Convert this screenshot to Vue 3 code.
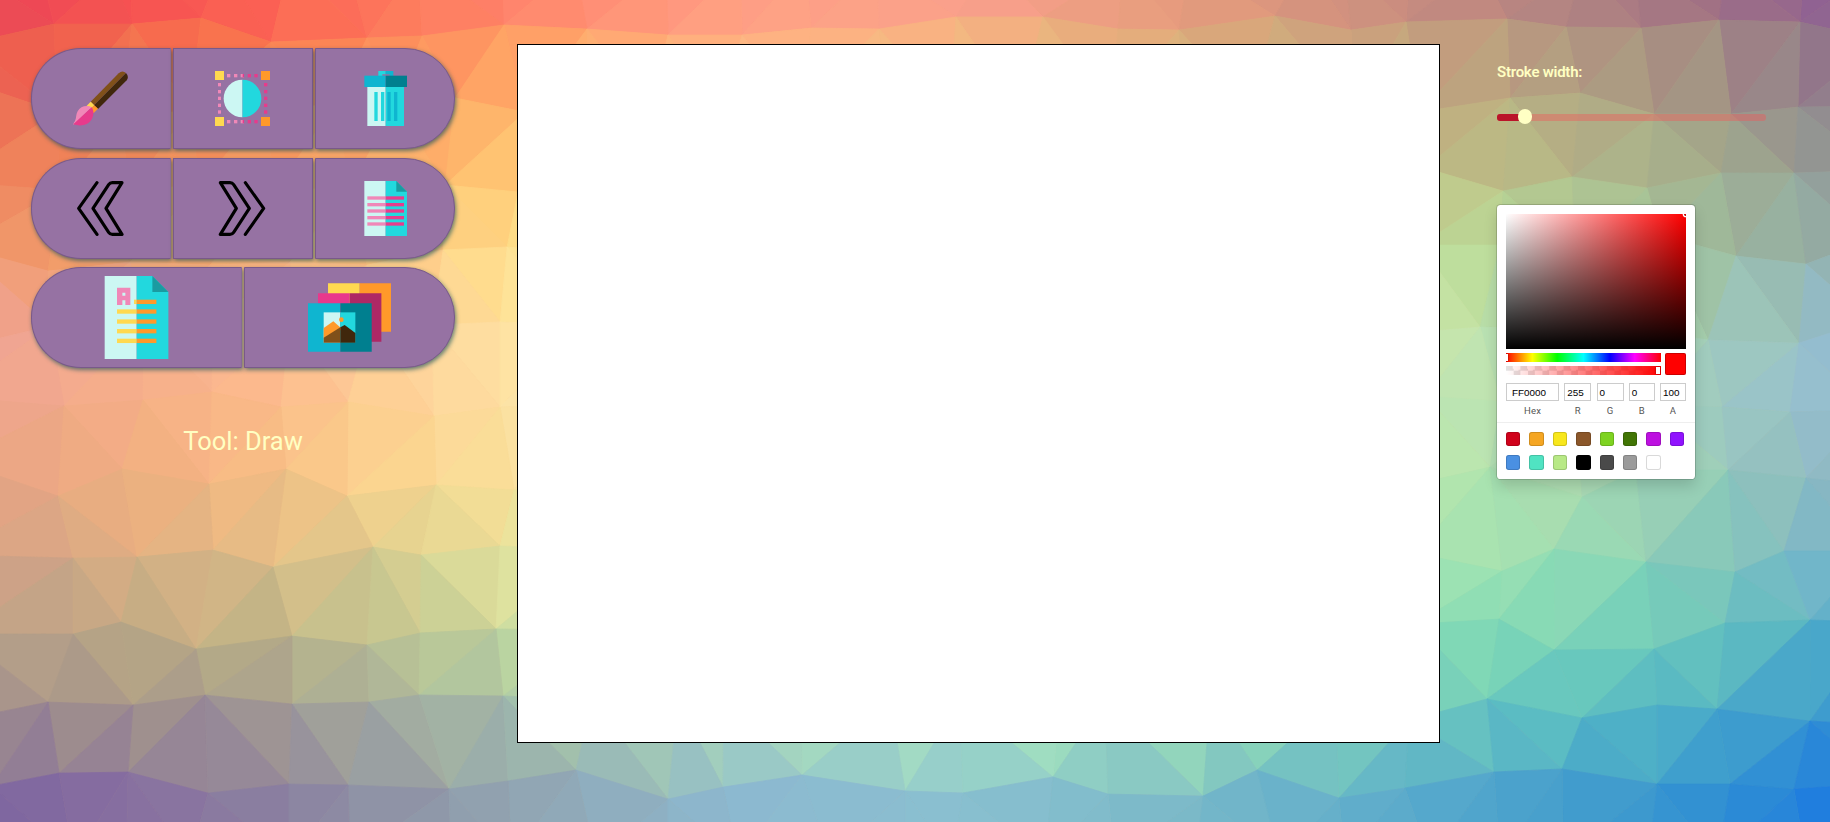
<script setup>
import { ref } from 'vue'

// Mesh vertices, one row of x,y pairs per line.
const rows = [
  [-30,-30, 40,-32, 110,-28, 130,-55, 222,-35, 290,-38, 347,-38, 418,-38, 503,-35, 575,-35, 666,-35, 740,-35, 805,-35, 877,-35, 990,-38, 1124,-35, 1190,-38, 1305,-38, 1345,-35, 1410,-35, 1480,-35, 1583,-35, 1635,-35, 1726,-35, 1804,-35, 1880,-35],
  [-30,43, 54,24, 132,24, 201,18, 271,42, 367,38, 422,36, 504,25, 587,29, 668,35, 742,35, 811,28, 879,29, 956,17, 1043,17, 1118,29, 1179,30, 1275,16, 1351,30, 1406,22, 1507,19, 1566,27, 1641,28, 1719,20, 1800,22, 1880,40],
  [-50,76, 57,112, 120,118, 190,110, 265,108, 335,105, 395,105, 455,98, 525,112, 590,110, 650,108, 720,110, 800,108, 890,110, 950,108, 1020,110, 1110,108, 1185,110, 1250,108, 1355,110, 1420,112, 1510,98, 1580,93, 1654,114, 1731,114, 1798,107, 1880,106],
  [-50,182, 60,190, 130,190, 200,185, 275,190, 350,188, 445,185, 518,192, 620,190, 1340,180, 1425,168, 1503,191, 1572,177, 1647,188, 1721,173, 1794,173, 1880,170],
  [-40,247, 48,271, 130,262, 210,265, 290,262, 367,265, 443,250, 507,247, 600,255, 1350,245, 1420,245, 1500,245, 1575,255, 1660,235, 1736,256, 1806,264, 1870,240],
  [-50,350, 50,326, 144,322, 213,322, 290,322, 370,322, 432,325, 500,322, 580,325, 1350,335, 1420,332, 1480,327, 1570,330, 1640,330, 1708,340, 1799,343, 1870,320],
  [-50,397, 64,406, 143,400, 212,392, 281,407, 348,402, 434,416, 500,407, 580,405, 1350,405, 1425,396, 1500,401, 1575,400, 1650,405, 1722,407, 1790,412, 1870,410],
  [-45,461, 58,496, 122,469, 209,484, 286,469, 347,496, 436,485, 514,490, 590,480, 1350,475, 1420,483, 1490,467, 1582,497, 1636,470, 1728,470, 1806,478, 1880,486],
  [-50,555, 73,558, 137,557, 213,550, 273,567, 373,547, 421,555, 500,546, 590,550, 1350,560, 1415,553, 1502,571, 1554,549, 1646,562, 1735,572, 1784,551, 1870,551],
  [-40,634, 73,634, 121,622, 196,649, 292,636, 367,645, 420,633, 496,629, 590,630, 680,630, 770,630, 860,630, 950,630, 1050,630, 1150,630, 1250,630, 1340,630, 1415,624, 1499,619, 1554,650, 1654,649, 1725,623, 1810,620, 1880,622],
  [-30,718, 48,702, 133,705, 205,695, 292,704, 369,702, 419,695, 503,696, 592,700, 678,700, 724,700, 803,700, 890,700, 960,700, 1060,700, 1105,700, 1210,700, 1335,700, 1409,720, 1487,699, 1582,718, 1657,705, 1717,709, 1810,721, 1880,725],
  [-8,786, 59,773, 128,772, 208,793, 289,784, 348,785, 449,789, 508,781, 576,770, 668,799, 723,787, 802,775, 905,791, 963,793, 1053,777, 1108,794, 1203,796, 1257,770, 1339,798, 1405,788, 1494,772, 1562,769, 1657,784, 1730,784, 1794,789, 1880,783],
  [-20,860, 74,860, 126,860, 190,860, 289,860, 350,860, 451,860, 511,860, 596,860, 668,860, 738,860, 830,860, 905,860, 952,860, 1045,860, 1115,860, 1195,860, 1280,860, 1345,860, 1430,860, 1500,860, 1563,860, 1648,860, 1718,860, 1806,860, 1890,860],
]

// Colour field sampled at each triangle's centroid.
const ys = [0, 60, 150, 250, 330, 400, 480, 560, 640, 720, 800]
const field = [
  [0, 'ec4656 ec5c50 ee7c58 f0986c f0a594 f0a68e e8a582 d5a387 b8a188 9e8c8e 7e66a0'],
  [130, 'f65252 f4694c f28c5a f4a46c f5af8e f6ad88 f0ae7e dcb084 baa884 a0908c 886fa0'],
  [260, 'fb6054 fb7a4e fa9b60 fab274 fcb991 fcb98a f6bd82 deba87 bab286 a09692 8a7ea0'],
  [390, 'fd765c fd8e5c fdae6a fec67f fdd09b fed195 fad48e dacd8e bcc492 a5ac9e 8f94a6'],
  [517, 'ff846c ffa064 ffc370 ffe28a ffe4a0 fee2a8 f9e096 e6e49e bed79e a2bca8 91a5b2'],
  [740, 'ff9e84 ffb282 f8c888 f4dc98 f2e4a8 ece6ac e4e4aa d4e4aa bce2b0 a5d4be 8cb9d0'],
  [960, 'faa08c f8b680 e8c488 e0d896 dce4a8 d4e6ac cee4aa c0e4ae b4e4b6 a5e1c3 8ac0d0'],
  [1180, 'e69b7d deac7a d4c084 cede94 cce4aa c8e6b0 c0e4ac b4e4b0 a2e0b4 96dab9 7ab9c8'],
  [1440, 'c48a80 c2a07e c0b882 c0de96 c6e4aa c4e6b2 b6e6ac a5e4b2 86dcb4 6cc6be 55a8cc'],
  [1570, 'b28282 b29b80 b4b687 aed49a b2deb4 acdeb9 acdab0 98deb4 76d4b8 5abec3 449ecc'],
  [1700, 'a07084 a48e82 a4aa8a 9ebe9e a2ceb4 a0cac2 98ccb6 82c8ba 6ac6bc 4bacc8 3291d2'],
  [1830, '906292 92768a 929492 94b0a8 92bcce 96bed0 8eb8c0 78b6ca 4eacc8 3492d2 207ede'],
].map(([x, s]) => [x, s.split(' ').map((h) => [0, 2, 4].map((i) => parseInt(h.slice(i, i + 2), 16)))])

function locate(list, v) {
  if (v <= list[0]) return [0, 0]
  const last = list.length - 1
  if (v >= list[last]) return [last - 1, 1]
  let i = 0
  while (list[i + 1] < v) i++
  return [i, (v - list[i]) / (list[i + 1] - list[i])]
}

const xs = field.map((f) => f[0])

function colorAt(x, y) {
  const [i, tx] = locate(xs, x)
  const [j, ty] = locate(ys, y)
  const mix = (a, b, t) => a + (b - a) * t
  const rgb = [0, 1, 2].map((c) =>
    Math.round(
      mix(
        mix(field[i][1][j][c], field[i + 1][1][j][c], tx),
        mix(field[i][1][j + 1][c], field[i + 1][1][j + 1][c], tx),
        ty,
      ),
    ),
  )
  return `rgb(${rgb.join(',')})`
}

// Bowyer-Watson Delaunay triangulation.
function triangulate(input) {
  const pts = input.concat([[-9000, -9000], [12000, -9000], [900, 15000]])
  const n = input.length
  const make = (a, b, c) => {
    const [ax, ay] = pts[a]
    const [bx, by] = pts[b]
    const [cx, cy] = pts[c]
    const d = 2 * (ax * (by - cy) + bx * (cy - ay) + cx * (ay - by))
    if (Math.abs(d) < 1e-9) return { v: [a, b, c], x: 0, y: 0, r: Infinity }
    const a2 = ax * ax + ay * ay
    const b2 = bx * bx + by * by
    const c2 = cx * cx + cy * cy
    const x = (a2 * (by - cy) + b2 * (cy - ay) + c2 * (ay - by)) / d
    const y = (a2 * (cx - bx) + b2 * (ax - cx) + c2 * (bx - ax)) / d
    return { v: [a, b, c], x, y, r: (ax - x) ** 2 + (ay - y) ** 2 }
  }
  let tris = [make(n, n + 1, n + 2)]
  for (let p = 0; p < n; p++) {
    const [px, py] = pts[p]
    const edges = new Map()
    tris = tris.filter((t) => {
      if ((px - t.x) ** 2 + (py - t.y) ** 2 >= t.r) return true
      for (let k = 0; k < 3; k++) {
        const e = [t.v[k], t.v[(k + 1) % 3]].sort((m, q) => m - q)
        const key = e.join()
        if (edges.has(key)) edges.delete(key)
        else edges.set(key, e)
      }
      return false
    })
    for (const [a, b] of edges.values()) tris.push(make(a, b, p))
  }
  return tris.filter((t) => t.v.every((i) => i < n)).map((t) => t.v.map((i) => pts[i]))
}

// A small jitter avoids degenerate collinear seeds.
const vertices = rows.flatMap((r) => {
  const out = []
  for (let i = 0; i < r.length; i += 2) {
    out.push([r[i] + ((i * 7) % 5) * 0.02, r[i + 1] + ((i * 3) % 7) * 0.02])
  }
  return out
})

const facets = triangulate(vertices).map((t) => ({
  points: t.map((p) => `${p[0].toFixed(1)},${p[1].toFixed(1)}`).join(' '),
  fill: colorAt((t[0][0] + t[1][0] + t[2][0]) / 3, (t[0][1] + t[1][1] + t[2][1]) / 3),
}))

const tool = ref('Draw')
const dots = [36, 57, 77, 98, 118]
const docLines = [46, 66, 85, 105, 124]
const articleLines = [100, 130, 159, 188]
const fields = [
  { label: 'Hex', value: 'FF0000', kind: 'hex' },
  { label: 'R', value: '255' },
  { label: 'G', value: '0' },
  { label: 'B', value: '0' },
  { label: 'A', value: '100' },
]
const presets = [
  '#d0021b', '#f5a623', '#f8e71c', '#8b572a', '#7ed321', '#417505', '#bd10e0', '#9013fe',
  '#4a90e2', '#50e3c2', '#b8e986', '#000000', '#4a4a4a', '#9b9b9b', '#ffffff',
]
</script>

<template>
  <div class="page">
    <svg class="mesh" width="1830" height="822" viewBox="0 0 1830 822" aria-hidden="true">
      <polygon v-for="(f, i) in facets" :key="i" :points="f.points" :fill="f.fill" :stroke="f.fill" stroke-width="0.8" />
    </svg>

    <aside class="tools">
      <div class="group">
        <button class="btn" aria-label="Draw">
          <svg class="icon" viewBox="0 0 165 165">
            <path fill="#80501a" d="M53 92 137 7Q148-4 159 6L63 103Z" />
            <path fill="#40270c" d="M63 103 159 6Q169 16 161 28L75 114Z" />
            <path fill="#ffd950" d="M53 92 40 106 52 115 64 103Z" />
            <path fill="#ff992a" d="M64 103 75 113 62 126 50 116Z" />
            <path fill="#f088b8" d="M56 109 1 162Q0 157 6 150C11 140 8 131 14 121 22 105 43 101 56 109Z" />
            <path fill="#e73b8c" d="M56 109C66 122 61 145 47 155 34 165 16 165 1 160Z" />
          </svg>
        </button>
        <button class="btn" aria-label="Select">
          <svg class="icon" viewBox="0 0 165 165">
            <path fill="#ffd950" d="M0 0h27v27H0zM0 138h27v27H0z" />
            <path fill="#ff992a" d="M138 0h27v27h-27zM138 138h27v27h-27z" />
            <template v-for="(d, i) in dots" :key="d">
              <rect v-for="y in [9, 147]" :key="y" :x="d" :y="y" width="10" height="10" :fill="i < 3 ? '#f088b8' : '#e73b8c'" />
              <rect x="9" :y="d" width="9" height="10" fill="#f088b8" />
              <rect x="147" :y="d" width="10" height="10" fill="#e73b8c" />
            </template>
            <path fill="#e73b8c" d="M83 9h4v10h-4zM83 147h4v10h-4z" />
            <path fill="#ccf7f3" d="M82.5 26a56.5 56.5 0 0 0 0 113z" />
            <path fill="#22d8de" d="M82.5 26a56.5 56.5 0 0 1 0 113z" />
          </svg>
        </button>
        <button class="btn" aria-label="Clear">
          <svg class="icon" viewBox="0 0 165 165">
            <path fill="#22d8de" d="M61 0h22v10H73v6H61z" />
            <path fill="#0fb5d0" d="M83 0h23v16H95v-6H83z" />
            <path fill="#0fb5d0" d="M19 14h64v34H19z" />
            <path fill="#007f8f" d="M83 14h64v34H83z" />
            <path fill="#ccf7f3" d="M28 48h55v117H28z" />
            <path fill="#22d8de" d="M83 48h55v117H83zM49 63h10v87H49zM69 63h10v87H69z" />
            <path fill="#0fb5d0" d="M88 63h10v87H88zM108 63h10v87h-10z" />
          </svg>
        </button>
      </div>

      <div class="group">
        <button class="btn" aria-label="Undo">
          <svg class="icon" viewBox="0 0 165 165">
            <path class="chevron" d="M72 5 17 82 72 160M118 5H147L99 82 147 160H118Q111 160 107 154L60 82 107 11Q111 5 118 5Z" />
          </svg>
        </button>
        <button class="btn" aria-label="Redo">
          <svg class="icon" viewBox="0 0 165 165">
            <path class="chevron" d="M91 5 146 82 91 160M45 5H16L64 82 16 160H45Q52 160 56 154L103 82 56 11Q52 5 45 5Z" />
          </svg>
        </button>
        <button class="btn" aria-label="Save document">
          <svg class="icon" viewBox="0 0 165 165">
            <path fill="#ccf7f3" d="M19 0h64v165H19z" />
            <path fill="#22d8de" d="M83 0h32l32 32v133H83z" />
            <path fill="#1a9ba1" d="M115 0v32h32z" />
            <template v-for="y in docLines" :key="y">
              <rect x="28" :y="y" width="55" height="10" fill="#f088b8" />
              <rect x="83" :y="y" width="55" height="10" fill="#e73b8c" />
            </template>
          </svg>
        </button>
      </div>

      <div class="group">
        <button class="btn" aria-label="Add text">
          <svg class="icon large" viewBox="0 0 250 250">
            <path fill="#ccf7f3" d="M29 0h96v250H29z" />
            <path fill="#22d8de" d="M125 0h47l48 48v202h-95z" />
            <path fill="#1a9ba1" d="M172 0v48h48z" />
            <path fill="#f088b8" fill-rule="evenodd" d="M66 35h40v52H91V73h-9v14H66zM82 50h9v9h-9z" />
            <rect x="117" y="71" width="8" height="13" fill="#ffd950" />
            <rect x="125" y="71" width="59" height="13" fill="#ff992a" />
            <template v-for="y in articleLines" :key="y">
              <rect x="66" :y="y" width="59" height="13" fill="#ffd950" />
              <rect x="125" :y="y" width="59" height="13" fill="#ff992a" />
            </template>
          </svg>
        </button>
        <button class="btn" aria-label="Add image">
          <svg class="icon large" viewBox="0 0 250 250">
            <path fill="#ffd950" d="M60 22h95v145H60z" />
            <path fill="#ff992a" d="M155 22h95v145h-95z" />
            <path fill="#e8388c" d="M30 52h95v145H30z" />
            <path fill="#ae2865" d="M125 52h95v145h-95z" />
            <path fill="#0fb5d0" d="M0 82h97v145H0z" />
            <path fill="#007f8f" d="M97 82h94v145H97z" />
            <path fill="#ccf7f3" d="M47 109h50v91H47z" />
            <path fill="#22d8de" d="M97 109h45v91H97z" />
            <path fill="#ff992a" d="M47 156 76 136 103 160 47 187Z" />
            <circle cx="100" cy="131" r="7" fill="#ff992a" />
            <path fill="#80501a" d="M47 185 97 154V200H47z" />
            <path fill="#40270c" d="M97 154 110 147 142 171V200H97z" />
          </svg>
        </button>
      </div>
      <p class="status">Tool: {{ tool }}</p>
    </aside>

    <main class="canvas"></main>

    <aside class="options">
      <div class="label"><span>Stroke width:</span></div>
      <div class="slider">
        <div class="fill"></div>
        <div class="thumb"></div>
      </div>

      <div class="picker">
        <div class="saturation"><span class="pointer"></span></div>
        <div class="sliders">
          <div class="bars">
            <div class="hue"><span class="handle start"></span></div>
            <div class="alpha"><span class="handle end"></span></div>
          </div>
          <div class="current"></div>
        </div>
        <div class="fields">
          <div v-for="f in fields" :key="f.label" class="field" :class="f.kind">
            <div class="value">{{ f.value }}</div>
            <div class="name">{{ f.label }}</div>
          </div>
        </div>
        <div class="presets">
          <span v-for="c in presets" :key="c" class="preset" :style="{ background: c }"></span>
        </div>
      </div>
    </aside>
  </div>
</template>

<style>
body {
  overflow: hidden;
}
</style>

<style scoped>
.page {
  position: relative;
  display: flex;
  align-items: flex-start;
  box-sizing: border-box;
  width: 1830px;
  height: 822px;
  padding-left: 31px;
  overflow: hidden;
  background: #f5b885;
  font-family: Roboto, "Liberation Sans", sans-serif;
}
.mesh {
  position: absolute;
  inset: 0;
}
.tools {
  position: relative;
  display: flex;
  flex-direction: column;
  gap: 8.5px;
  width: 424px;
  padding-top: 48px;
}
.group {
  display: flex;
  gap: 2px;
}
.btn {
  display: flex;
  flex: 1;
  align-items: center;
  justify-content: center;
  box-sizing: border-box;
  height: 101px;
  padding: 0;
  border: 1px solid #79598a;
  background: #9672a3;
  box-shadow: 1px 2px 4px rgba(20, 80, 90, 0.65);
}
.btn:first-child {
  border-right-color: #8d6c9b;
  border-radius: 50px 0 0 50px;
}
.btn:last-child {
  border-radius: 0 50px 50px 0;
}
.icon {
  display: block;
  width: 55px;
  height: 55px;
}
.btn:not(:last-child) .icon:not(.large) {
  margin-right: 1px;
}
.icon.large {
  width: 83.4px;
  height: 83.4px;
}
.chevron {
  fill: none;
  stroke: #000;
  stroke-width: 9.5;
  stroke-linecap: round;
  stroke-linejoin: round;
}
.status {
  margin: 48px 0 0;
  color: #ffffc2;
  font-size: 25.5px;
  line-height: 32px;
  text-align: center;
}
.canvas {
  position: relative;
  box-sizing: border-box;
  width: 923px;
  height: 699px;
  margin: 44px 0 0 62px;
  border: 1px solid #000;
  background: #fff;
}
.options {
  position: relative;
  margin-left: 57px;
  padding-top: 62px;
}
.label {
  height: 20px;
  color: #ffffc2;
  font-size: 15px;
  font-weight: 600;
  line-height: 20px;
  letter-spacing: -0.25px;
}
.slider {
  position: relative;
  width: 269px;
  height: 7px;
  margin-top: 32px;
  border-radius: 3px;
  background: rgba(245, 85, 87, 0.4);
}
.fill {
  width: 28px;
  height: 7px;
  border-radius: 3px 0 0 3px;
  background: #ba1429;
}
.thumb {
  position: absolute;
  top: -5px;
  left: 21px;
  width: 14px;
  height: 15px;
  border-radius: 7px;
  background: #ffffc4;
}
.picker {
  box-sizing: border-box;
  width: 198px;
  height: 274px;
  margin-top: 84px;
  padding: 9px 9px 0;
  border-radius: 3.6px;
  background: #fff;
  box-shadow: 0 0 0 1px rgba(0, 0, 0, 0.15), 0 7px 14px rgba(0, 0, 0, 0.15);
}
.saturation {
  position: relative;
  height: 135px;
  overflow: hidden;
  background: linear-gradient(to top, #000, transparent), linear-gradient(to right, #fff, transparent), #f00;
}
.pointer {
  position: absolute;
  top: -2px;
  right: -2px;
  width: 4px;
  height: 4px;
  border-radius: 50%;
  box-shadow: 0 0 0 1.35px #fff, inset 0 0 1px 1px rgba(0, 0, 0, 0.3);
}
.sliders {
  display: flex;
  gap: 4px;
  margin-top: 4px;
}
.bars {
  display: flex;
  flex-direction: column;
  gap: 4px;
  width: 155px;
}
.hue,
.alpha {
  position: relative;
  height: 9px;
  overflow: hidden;
}
.hue {
  background: linear-gradient(to right, #f00 0%, #ff0 17%, #0f0 33%, #0ff 50%, #00f 67%, #f0f 83%, #f00 100%);
}
.alpha {
  background: linear-gradient(to right, rgba(255, 0, 0, 0), #f00), repeating-conic-gradient(#fff 0 25%, #e2e2e2 0 50%) 0 -3px / 14.4px 14.4px;
}
.handle {
  position: absolute;
  top: 1px;
  width: 4px;
  height: 7px;
  background: #fff;
  box-shadow: 0 0 2px rgba(0, 0, 0, 0.6);
}
.start {
  left: -2px;
}
.end {
  right: 1px;
}
.current {
  width: 21px;
  height: 22px;
  border-radius: 2px;
  background: #f00;
  box-shadow: inset 0 0 0 1px rgba(0, 0, 0, 0.2);
}
.fields {
  display: grid;
  grid-template-columns: 53px 27px 27px 26px 26px;
  justify-content: space-between;
  margin-top: 8px;
}
.value {
  box-sizing: border-box;
  height: 18px;
  padding-left: 2px;
  border: 1px solid #ccc;
  color: #000;
  font-family: "Liberation Sans", Arial, sans-serif;
  font-size: 9.9px;
  line-height: 17px;
}
.hex .value {
  padding-left: 5px;
}
.name {
  height: 21px;
  color: #555;
  font-size: 9.5px;
  line-height: 20px;
  letter-spacing: 0.2px;
  text-align: center;
}
.presets {
  display: flex;
  flex-wrap: wrap;
  gap: 9px;
  margin: 0 -9px;
  padding: 9px 0 0 9px;
  border-top: 1px solid #eee;
}
.preset {
  width: 14.4px;
  height: 14.4px;
  border-radius: 2.7px;
  box-shadow: inset 0 0 0 1px rgba(0, 0, 0, 0.15);
}
</style>
